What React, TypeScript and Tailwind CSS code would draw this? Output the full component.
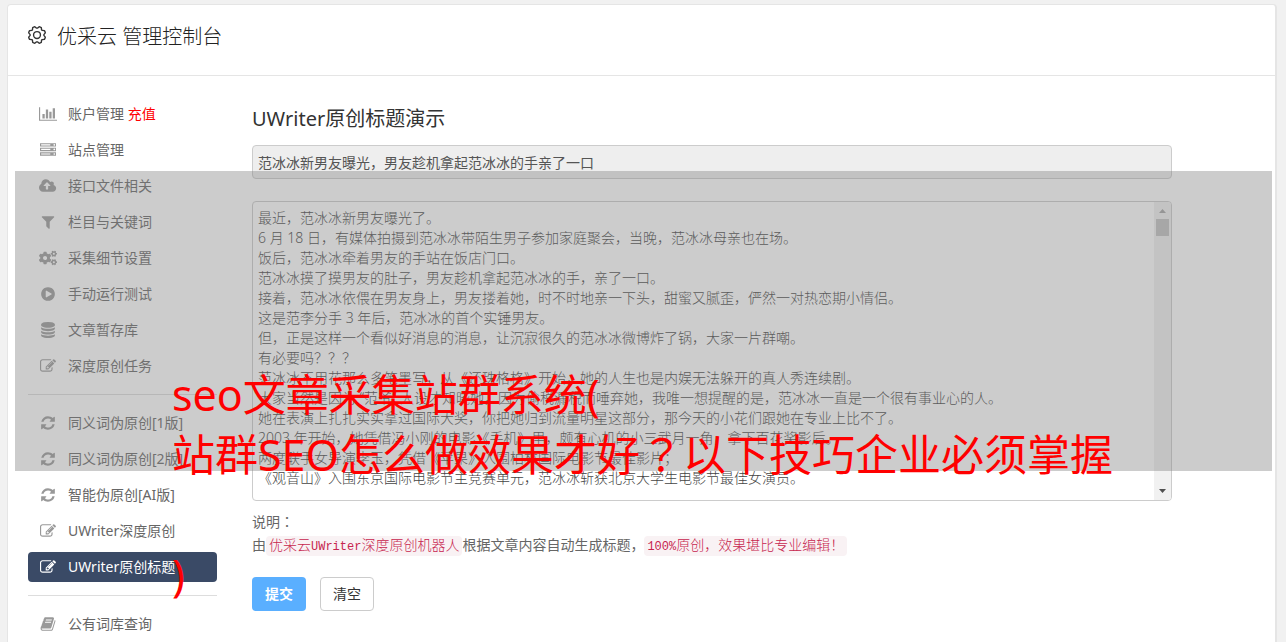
import type { ReactNode } from "react";
import { FaCogs } from "react-icons/fa";
import { PiGear } from "react-icons/pi";

type IconName =
  | "chart"
  | "server"
  | "upload"
  | "filter"
  | "cogs"
  | "play"
  | "database"
  | "edit"
  | "refresh"
  | "book";

const paths: Record<Exclude<IconName, "cogs">, { width: number; d: string }> = {
  chart: {
    width: 2048,
    d: "M640 896v512h-256v-512h256zm384-512v1024h-256v-1024h256zm1024 1152v128h-2048v-1536h128v1408h1920zm-640-896v768h-256v-768h256zm384-384v1152h-256v-1152h256z",
  },
  server: {
    width: 1792,
    d: "M128 1408h1024v-128h-1024v128zm0-512h1024v-128h-1024v128zm1568 448q0-40-28-68t-68-28-68 28-28 68 28 68 68 28 68-28 28-68zm-1568-960h1024v-128h-1024v128zm1568 448q0-40-28-68t-68-28-68 28-28 68 28 68 68 28 68-28 28-68zm0-512q0-40-28-68t-68-28-68 28-28 68 28 68 68 28 68-28 28-68zm96 832v384h-1792v-384h1792zm0-512v384h-1792v-384h1792zm0-512v384h-1792v-384h1792z",
  },
  upload: {
    width: 1920,
    d: "M1280 864q0-14-9-23l-352-352q-9-9-23-9t-23 9l-351 351q-10 12-10 24 0 14 9 23t23 9h224v352q0 13 9.500 22.500t22.500 9.500h192q13 0 22.500-9.500t9.500-22.500v-352h224q13 0 22.500-9.500t9.500-22.500zm640 288q0 159-112.500 271.500t-271.500 112.500h-1088q-185 0-316.500-131.500t-131.500-316.500q0-130 70-240t188-165q-2-30-2-43 0-212 150-362t362-150q156 0 285.500 87t188.500 231q71-62 166-62 106 0 181 75t75 181q0 76-41 138 130 31 213.500 135.500t83.500 238.500z",
  },
  filter: {
    width: 1792,
    d: "M1595 295q17 41-14 70l-493 493v742q0 42-39 59-13 5-25 5-27 0-45-19l-256-256q-19-19-19-45v-486l-493-493q-31-29-14-70 17-39 59-39h1280q42 0 59 39z",
  },
  play: {
    width: 1792,
    d: "M896 128q209 0 385.500 103t279.500 279.500 103 385.500-103 385.500-279.500 279.500-385.500 103-385.500-103-279.500-279.500-103-385.500 103-385.500 279.500-279.500 385.500-103zm384 823q32-18 32-55t-32-55l-544-320q-31-19-64-1-32 19-32 56v640q0 37 32 56 16 8 32 8 17 0 32-9z",
  },
  database: {
    width: 1792,
    d: "M896 768q237 0 443-43t325-127v170q0 69-103 128t-280 93.500-385 34.500-385-34.500-280-93.500-103-128v-170q119 84 325 127t443 43zm0 768q237 0 443-43t325-127v170q0 69-103 128t-280 93.500-385 34.500-385-34.500-280-93.500-103-128v-170q119 84 325 127t443 43zm0-384q237 0 443-43t325-127v170q0 69-103 128t-280 93.500-385 34.500-385-34.500-280-93.500-103-128v-170q119 84 325 127t443 43zm0-1152q208 0 385 34.500t280 93.500 103 128v128q0 69-103 128t-280 93.500-385 34.500-385-34.500-280-93.500-103-128v-128q0-69 103-128t280-93.500 385-34.500z",
  },
  edit: {
    width: 1792,
    d: "M888 1184l116-116-152-152-116 116v56h96v96h56zm440-720q-16-16-33 1l-350 350q-17 17-1 33t33-1l350-350q17-17 1-33zm80 594v190q0 119-84.500 203.500t-203.500 84.500h-832q-119 0-203.500-84.500t-84.500-203.500v-832q0-119 84.500-203.500t203.500-84.500h832q63 0 117 25 15 7 18 23 3 17-9 29l-49 49q-14 14-32 8-23-6-45-6h-832q-66 0-113 47t-47 113v832q0 66 47 113t113 47h832q66 0 113-47t47-113v-126q0-13 9-22l64-64q15-15 35-7t20 29zm-96-738l288 288-672 672h-288v-288zm444 132l-92 92-288-288 92-92q28-28 68-28t68 28l152 152q28 28 28 68t-28 68z",
  },
  refresh: {
    width: 1792,
    d: "M1639 1056q0 5-1 7-64 268-268 434.500t-478 166.500q-146 0-282.500-55t-243.500-157l-129 129q-19 19-45 19t-45-19-19-45v-448q0-26 19-45t45-19h448q26 0 45 19t19 45-19 45l-137 137q71 66 161 102t187 36q134 0 250-65t186-179q11-17 53-117 8-23 30-23h192q13 0 22.500 9.500t9.500 22.500zm25-800v448q0 26-19 45t-45 19h-448q-26 0-45-19t-19-45 19-45l138-138q-148-137-349-137-134 0-250 65t-186 179q-11 17-53 117-8 23-30 23h-199q-13 0-22.500-9.500t-9.500-22.500v-7q65-268 270-434.500t480-166.500q146 0 284 55.500t245 156.500l130-129q19-19 45-19t45 19 19 45z",
  },
  book: {
    width: 1792,
    d: "M1703 478q40 57 18 129l-275 906q-19 64-76.500 107.500t-122.500 43.500h-923q-77 0-148.500-53.500t-99.500-131.500q-24-67-2-127 0-4 3-27t4-37q1-8-3-21.500t-3-19.500q2-11 8-21t16.500-23.500 16.500-23.500q23-38 45-91.500t30-91.500q3-10 .5-30t-.5-28q3-11 17-28t17-23q21-36 42-92t25-90q1-9-2.500-32t.5-28q4-13 22-30.500t22-22.500q19-26 42.500-84.500t27.500-96.500q1-8-3-25.500t-2-26.500q2-8 9-18t18-23 17-21q8-12 16.500-30.500t15-35 16-36 19.500-32 26.500-23.500 36-11.500 47.500 5.500l-1 3q38-9 51-9h761q74 0 114 56t18 130l-274 906q-36 119-71.500 153.500t-128.500 34.500h-869q-27 0-38 15-11 16-1 43 24 70 144 70h923q29 0 56-15.500t35-41.500l300-987q7-22 5-57 38 15 59 43zm-1064 2q-4 13 2 22.500t20 9.500h608q13 0 25.500-9.500t16.500-22.500l21-64q4-13-2-22.500t-20-9.500h-608q-13 0-25.500 9.500t-16.500 22.500zm-83 256q-4 13 2 22.500t20 9.500h608q13 0 25.500-9.500t16.500-22.500l21-64q4-13-2-22.500t-20-9.500h-608q-13 0-25.500 9.500t-16.500 22.500z",
  },
};

function Icon({ name }: { name: IconName }) {
  if (name === "cogs") return <FaCogs className="h-4 w-[18px]" />;
  const { width, d } = paths[name];
  return (
    <svg viewBox={`0 0 ${width} 1792`} className="h-4 w-auto" fill="currentColor" aria-hidden="true">
      <path d={d} />
    </svg>
  );
}

type Item = { icon: IconName; label: string; extra?: string; active?: boolean };

const groups: Item[][] = [
  [
    { icon: "chart", label: "账户管理", extra: "充值" },
    { icon: "server", label: "站点管理" },
    { icon: "upload", label: "接口文件相关" },
    { icon: "filter", label: "栏目与关键词" },
    { icon: "cogs", label: "采集细节设置" },
    { icon: "play", label: "手动运行测试" },
    { icon: "database", label: "文章暂存库" },
    { icon: "edit", label: "深度原创任务" },
  ],
  [
    { icon: "refresh", label: "同义词伪原创[1版]" },
    { icon: "refresh", label: "同义词伪原创[2版]" },
    { icon: "refresh", label: "智能伪原创[AI版]" },
    { icon: "edit", label: "UWriter深度原创" },
    { icon: "edit", label: "UWriter原创标题", active: true },
  ],
  [{ icon: "book", label: "公有词库查询" }],
];

const article = `最近，范冰冰新男友曝光了。
6 月 18 日，有媒体拍摄到范冰冰带陌生男子参加家庭聚会，当晚，范冰冰母亲也在场。
饭后，范冰冰牵着男友的手站在饭店门口。
范冰冰摸了摸男友的肚子，男友趁机拿起范冰冰的手，亲了一口。
接着，范冰冰依偎在男友身上，男友搂着她，时不时地亲一下头，甜蜜又腻歪，俨然一对热恋期小情侣。
这是范李分手 3 年后，范冰冰的首个实锤男友。
但，正是这样一个看似好消息的消息，让沉寂很久的范冰冰微博炸了锅，大家一片群嘲。
有必要吗？？？
范冰冰不用花那么多笔墨写，从《还珠格格》开始，她的人生也是内娱无法躲开的真人秀连续剧。
大家当然是因为 “范爷” 人设才知晓她，因为偷税漏税而唾弃她，我唯一想提醒的是，范冰冰一直是一个很有事业心的人。
她在表演上扎扎实实拿过国际大奖，你把她归到流量明星这部分，那今天的小花们跟她在专业上比不了。
2003 年开始，她凭借冯小刚的电影《手机》里，颇有心机的小三武月一角，拿下百花奖影后。
两度联手女导演李玉，凭借《苹果》入围柏林国际电影节最佳影片；
《观音山》入围东京国际电影节主竞赛单元，范冰冰斩获北京大学生电影节最佳女演员。`;

function Code({ children }: { children: ReactNode }) {
  return (
    <code className="rounded bg-[#f9f2f4] px-[3px] py-[2px] font-['Liberation_Mono','Noto_Sans_CJK_SC',monospace] text-sm leading-none font-light text-[#c7254e]">
      {children}
    </code>
  );
}

/* Full-width marks drawn in the middle of their cell. */
function Mark({ children }: { children: ReactNode }) {
  return <span className="font-['Noto_Sans_CJK_JP',sans-serif] leading-none">{children}</span>;
}

export default function App() {
  return (
    <div className="relative min-h-screen overflow-hidden bg-[#f1f1f1] pt-1 pr-[9px] pl-[7px] font-['Noto_Sans','Noto_Sans_CJK_SC',sans-serif] text-sm text-[#666]">
      <div className="min-h-screen rounded-t border border-r-2 border-[#e5e5e5] bg-white">
        <header className="flex h-[71px] items-start border-b border-[#e5e5e5] pt-4 pl-[18px] text-[#333]">
          <PiGear className="mt-[3px] size-[22px]" aria-hidden="true" />
          <h1 className="ml-[9px] text-xl leading-8 font-light text-[#222]">优采云 管理控制台</h1>
        </header>

        <div className="flex gap-[35px] pt-[23px] pr-[103px] pl-5">
          <nav className="w-[189px] shrink-0" aria-label="管理">
            {groups.map((items, g) => (
              <ul
                key={g}
                className={g > 0 ? "mt-[13px] flex flex-col gap-[6px] border-t border-[#ddd] pt-[13px]" : "flex flex-col gap-[6px]"}
              >
                {items.map((item) => (
                  <li key={item.label}>
                    <a
                      href="#"
                      aria-current={item.active ? "page" : undefined}
                      className={
                        item.active
                          ? "flex h-[30px] items-center gap-[10px] rounded bg-[#3a4a66] pl-[10px] text-white"
                          : "flex h-[30px] items-center gap-[10px] pl-[10px]"
                      }
                    >
                      <span className={item.active ? "flex w-5 justify-center" : "flex w-5 justify-center text-[#999]"}>
                        <Icon name={item.icon} />
                      </span>
                      <span>
                        {item.label}
                        {item.extra && <span className="text-[#f00]"> {item.extra}</span>}
                      </span>
                    </a>
                  </li>
                ))}
              </ul>
            ))}
          </nav>

          <main className="min-w-0 flex-1">
            <h2 className="text-xl leading-10 text-[#333]">UWriter原创标题演示</h2>
            <input
              type="text"
              readOnly
              aria-label="标题"
              defaultValue="范冰冰新男友曝光，男友趁机拿起范冰冰的手亲了一口"
              className="mt-[6px] block h-[34px] w-full rounded border border-[#ccc] bg-[#eee] px-[5px] text-[#555] outline-none"
            />
            <div className="mt-[22px] flex h-[300px] overflow-hidden rounded border border-[#ccc]">
              <textarea
                aria-label="文章内容"
                defaultValue={article}
                className="min-w-0 flex-1 resize-none overflow-hidden px-[5px] py-[6px] leading-5 font-light text-[#444] outline-none"
              />
              <div className="flex w-[17px] flex-col items-center bg-[#f1f1f1] py-[7px]" aria-hidden="true">
                <svg viewBox="0 0 7 4" className="h-1 w-[7px]" fill="#a3a3a3">
                  <path d="M3.500 0L7 4H0z" />
                </svg>
                <div className="mt-[6px] h-[17px] w-[13px] bg-[#c1c1c1]" />
                <svg viewBox="0 0 7 4" className="mt-auto h-1 w-[7px]" fill="#505050">
                  <path d="M0 0h7L3.500 4z" />
                </svg>
              </div>
            </div>
            <div className="mt-[9px] leading-[23px]">
              <p>
                说明<Mark>：</Mark>
              </p>
              <p>
                由
                <Code>
                  优采云<span className="text-xs leading-none">UWriter</span>深度原创机器人
                </Code>
                根据文章内容自动生成标题，
                <Code>
                  <span className="text-xs leading-none">100%</span>原创，效果堪比专业编辑！
                </Code>
              </p>
            </div>
            <div className="mt-[21px] flex gap-[14px]">
              <button type="button" className="h-[34px] w-[54px] rounded bg-[#5aafff] font-bold text-white">
                提交
              </button>
              <button type="button" className="h-[34px] w-[54px] rounded border border-[#ccc] bg-white text-[#333]">
                清空
              </button>
            </div>
          </main>
        </div>
      </div>

      <div className="pointer-events-none absolute top-[171px] right-[14px] left-[15px] h-[300px] bg-[#808080]/40">
        <p className="mt-[194px] ml-[157px] text-[43px] leading-[60px] whitespace-pre text-[#f00]">
          {"seo文章采集站群系统(\n站群SEO怎么做效果才好"}
          <Mark>？</Mark>
          {"以下技巧企业必须掌握\n\n)"}
        </p>
      </div>
    </div>
  );
}
